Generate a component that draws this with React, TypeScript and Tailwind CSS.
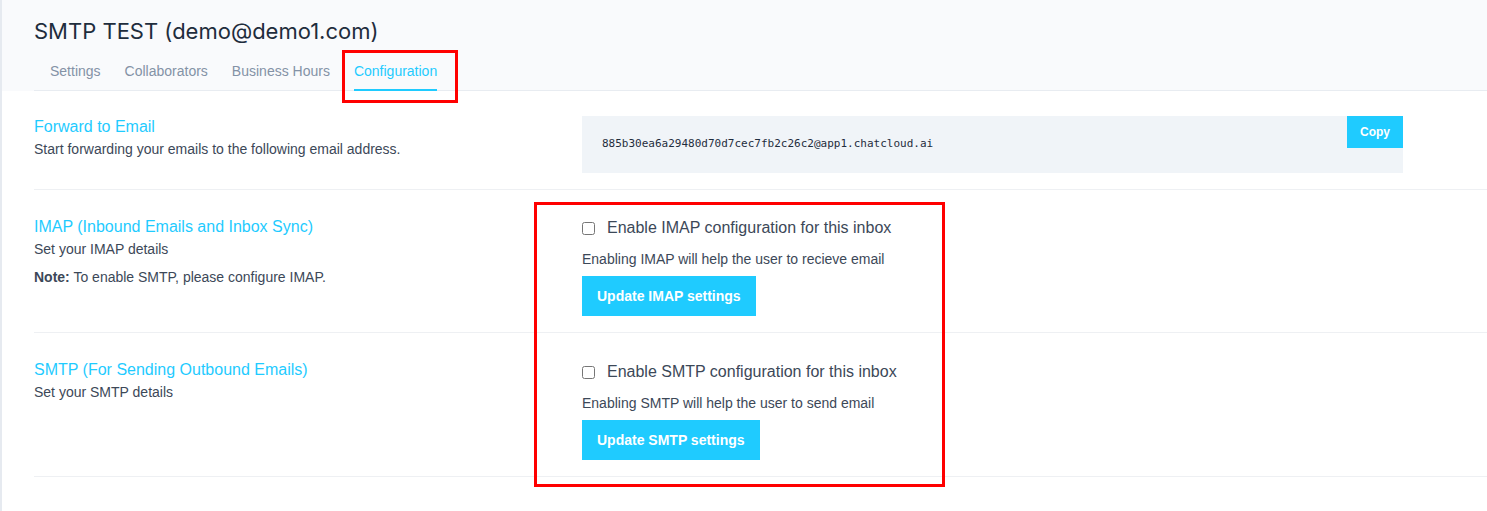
import React from 'react';

const tabs = ['Settings', 'Collaborators', 'Business Hours', 'Configuration'];

const Checkbox: React.FC<{ label: string }> = ({ label }) => (
  <label className="flex h-6 items-center gap-3 text-base text-[#3c4858]">
    <input type="checkbox" className="m-0 h-[13px] w-[13px]" />
    <span>{label}</span>
  </label>
);

const CyanButton: React.FC<{ children: React.ReactNode }> = ({ children }) => (
  <button className="mt-[7px] h-10 bg-[#1fcbff] px-[15px] text-sm font-bold text-white">{children}</button>
);

export default function App() {
  return (
    <div className="relative min-h-[511px] border-l-2 border-[#e6eaf0] bg-white font-['Liberation_Sans',Arial,sans-serif]">
      {/* header */}
      <div className="bg-[#f9fafc] pl-[32px] pt-[15px]">
        <h1 className="font-['Inter',sans-serif] text-[22px] leading-8 text-[#1f2d3d]">SMTP TEST (demo@demo1.com)</h1>
        <nav className="mt-1 border-b border-[#e8ecf1]">
          <ul className="flex gap-6 pl-4">
            {tabs.map((t) => (
              <li
                key={t}
                className={
                  t === 'Configuration'
                    ? '-mb-px border-b-2 border-[#1fcbff] pb-[8px] pt-[10px] text-sm leading-5 text-[#1fcbff]'
                    : '-mb-px border-b-2 border-transparent pb-[8px] pt-[10px] text-sm leading-5 text-[#8492a6]'
                }
              >
                {t}
              </li>
            ))}
          </ul>
        </nav>
      </div>

      {/* content */}
      <div className="pl-[32px]">
        <div className="flex border-b border-[#eef0f3] pb-4 pt-6">
          <div className="w-[548px]">
            <h2 className="text-base leading-6 text-[#1fcbff]">Forward to Email</h2>
            <p className="text-sm leading-5 text-[#3c4858]">Start forwarding your emails to the following email address.</p>
          </div>
          <div className="mt-px flex h-[57px] w-[821px] items-start justify-between bg-[#f0f4f8]">
            <code className="self-center pl-5 font-['DejaVu_Sans_Mono',monospace] text-[11px] text-[#1f2d3d]">
              885b30ea6a29480d70d7cec7fb2c26c2@app1.chatcloud.ai
            </code>
            <button className="h-8 w-14 bg-[#1fcbff] text-xs font-bold text-white">Copy</button>
          </div>
        </div>

        <div className="flex border-b border-[#eef0f3] pb-4 pt-[25px]">
          <div className="w-[548px]">
            <h2 className="text-base leading-6 text-[#1fcbff]">IMAP (Inbound Emails and Inbox Sync)</h2>
            <p className="text-sm leading-5 text-[#3c4858]">Set your IMAP details</p>
            <p className="mt-2 text-sm leading-5 text-[#3c4858]">
              <span className="font-bold">Note:</span> To enable SMTP, please configure IMAP.
            </p>
          </div>
          <div className="mt-px flex flex-col items-start">
            <Checkbox label="Enable IMAP configuration for this inbox" />
            <p className="mt-[9px] text-sm leading-5 text-[#3c4858]">Enabling IMAP will help the user to recieve email</p>
            <CyanButton>Update IMAP settings</CyanButton>
          </div>
        </div>

        <div className="flex border-b border-[#eef0f3] pb-4 pt-6">
          <div className="w-[548px] pt-px">
            <h2 className="text-base leading-6 text-[#1fcbff]">SMTP (For Sending Outbound Emails)</h2>
            <p className="text-sm leading-5 text-[#3c4858]">Set your SMTP details</p>
          </div>
          <div className="mt-[3px] flex flex-col items-start">
            <Checkbox label="Enable SMTP configuration for this inbox" />
            <p className="mt-[9px] text-sm leading-5 text-[#3c4858]">Enabling SMTP will help the user to send email</p>
            <CyanButton>Update SMTP settings</CyanButton>
          </div>
        </div>
      </div>

      {/* red annotation boxes */}
      <div className="pointer-events-none absolute left-[340px] top-[50px] h-[53px] w-[116px] border-[3px] border-[#ff0000]" />
      <div className="pointer-events-none absolute left-[532px] top-[202px] h-[285px] w-[411px] border-[3px] border-[#ff0000]" />
    </div>
  );
}
